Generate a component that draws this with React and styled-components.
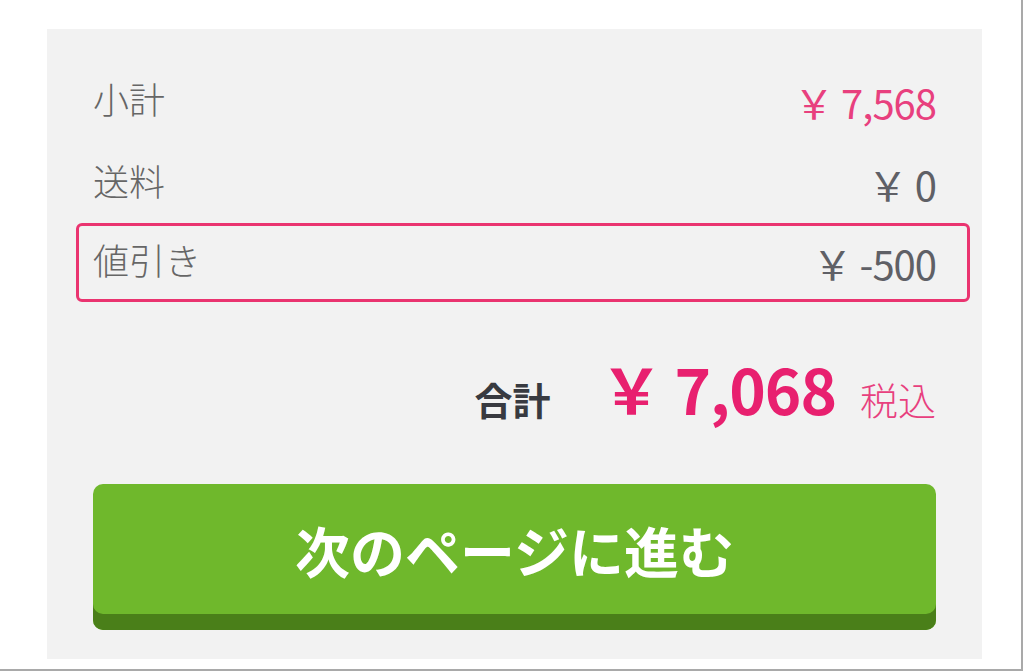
import React from 'react'
import styled, { createGlobalStyle } from 'styled-components'

const GlobalStyle = createGlobalStyle`
  html, body {
    margin: 0;
    padding: 0;
    background: #fff;
  }
  body {
    font-family: "Noto Sans CJK JP", "Noto Sans", sans-serif;
  }
`

const rows = [
  { label: '小計', value: '￥ 7,568', accent: true },
  { label: '送料', value: '￥ 0' },
  { label: '値引き', value: '￥ -500', marked: true },
]

function App() {
  return (
    <Frame>
      <GlobalStyle />
      <Panel>
        <Lines>
          {rows.map((r) => (
            <Line key={r.label} $marked={r.marked}>
              <Label>{r.label}</Label>
              <Amount $accent={r.accent}>{r.value}</Amount>
            </Line>
          ))}
        </Lines>
        <Total>
          <TotalLabel>合計</TotalLabel>
          <TotalPrice>￥ 7,068</TotalPrice>
          <TaxNote>税込</TaxNote>
        </Total>
        <NextButton>次のページに進む</NextButton>
      </Panel>
    </Frame>
  )
}

export default App

const Frame = styled.div`
  box-sizing: border-box;
  width: 1023px;
  height: 671px;
  border-right: 2px solid #a9a9a9;
  border-bottom: 2px solid #a9a9a9;
  padding: 29px 0 0 47px;
`

const Panel = styled.div`
  box-sizing: border-box;
  width: 935px;
  height: 630px;
  background: #f2f2f2;
  padding: 32px 46px 0;
  display: flex;
  flex-direction: column;
`

const Lines = styled.div`
  display: flex;
  flex-direction: column;
`

const Line = styled.div`
  display: flex;
  justify-content: space-between;
  align-items: center;
  height: 82px;
  box-sizing: border-box;
  ${(p) =>
    p.$marked &&
    `
    height: 79px;
    margin: -2px -34px 0 -17px;
    padding: 0 31px 0 14px;
    border: 3px solid #ea3470;
    border-radius: 6px;
  `}
`

const Label = styled.span`
  font-size: 36px;
  font-weight: 300;
  color: #666;
  line-height: 1;
  margin-top: -8px;
`

const Amount = styled.span`
  font-size: 40px;
  font-weight: 400;
  color: ${(p) => (p.$accent ? '#e8407e' : '#5f6066')};
  line-height: 1;
  letter-spacing: -1px;
`

const Total = styled.div`
  display: flex;
  justify-content: flex-end;
  align-items: baseline;
  margin-top: 55px;
  line-height: 1;
`

const TotalLabel = styled.span`
  font-size: 38px;
  font-weight: 700;
  color: #383a40;
  margin-right: 50px;
`

const TotalPrice = styled.span`
  font-size: 62px;
  font-weight: 700;
  color: #e8206f;
  margin-right: 24px;
  letter-spacing: -1px;
`

const TaxNote = styled.span`
  font-size: 38px;
  font-weight: 300;
  color: #e8407e;
`

const NextButton = styled.button`
  margin-top: 65px;
  height: 146px;
  border: none;
  border-radius: 10px;
  background: #6fb82c;
  box-shadow: inset 0 -16px 0 #4a7f19;
  padding: 0 0 16px;
  color: #fff;
  font-family: "Noto Sans CJK JP", sans-serif;
  font-size: 55px;
  font-weight: 700;
  cursor: pointer;
`
